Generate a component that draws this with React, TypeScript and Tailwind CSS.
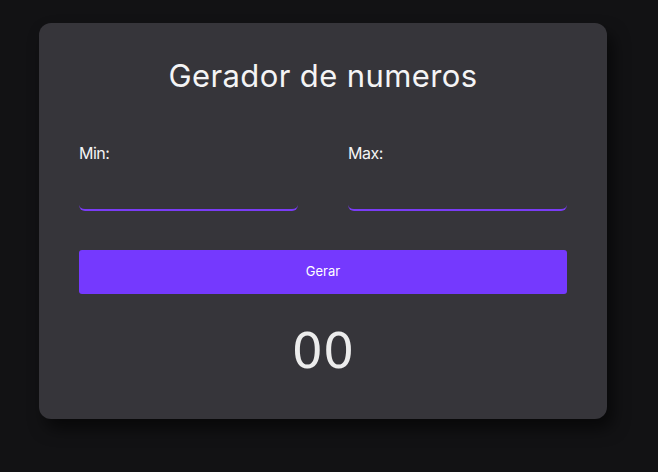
export default function App() {
  return (
    <div className="min-h-screen bg-[#121214] pt-[23px] pl-[39px]" style={{ fontFamily: "Inter, 'Noto Sans', sans-serif" }}>
      <div className="w-[568px] h-[396px] rounded-xl bg-[#36353a] px-10 pt-[37px] shadow-[6px_10px_16px_rgba(0,0,0,0.55)]">
        <h1 className="text-center text-[31px] leading-none text-[#f4f4f5] tracking-[0.4px]">Gerador de numeros</h1>

        <div className="mt-[54px] flex justify-between">
          <label className="w-[219px] flex flex-col">
            <span className="text-[16px] leading-none text-[#f4f4f5] tracking-[-0.5px]">Min:</span>
            <input
              type="number"
              className="mt-[10px] h-[40px] bg-transparent border-b-2 border-[#7a3cf5] rounded-b-md outline-none text-white"
            />
          </label>
          <label className="w-[219px] flex flex-col">
            <span className="text-[16px] leading-none text-[#f4f4f5] tracking-[-0.5px]">Max:</span>
            <input
              type="number"
              className="mt-[10px] h-[40px] bg-transparent border-b-2 border-[#7a3cf5] rounded-b-md outline-none text-white"
            />
          </label>
        </div>

        <button className="mt-[39px] w-full h-[44px] rounded-[3px] bg-[#7539fe] text-white text-[13px]">
          Gerar
        </button>

        <p
          className="mt-[33px] text-center text-[49px] leading-none text-[#ececec]"
          style={{ fontFamily: "'DejaVu Sans', sans-serif" }}
        >
          00
        </p>
      </div>
    </div>
  );
}
